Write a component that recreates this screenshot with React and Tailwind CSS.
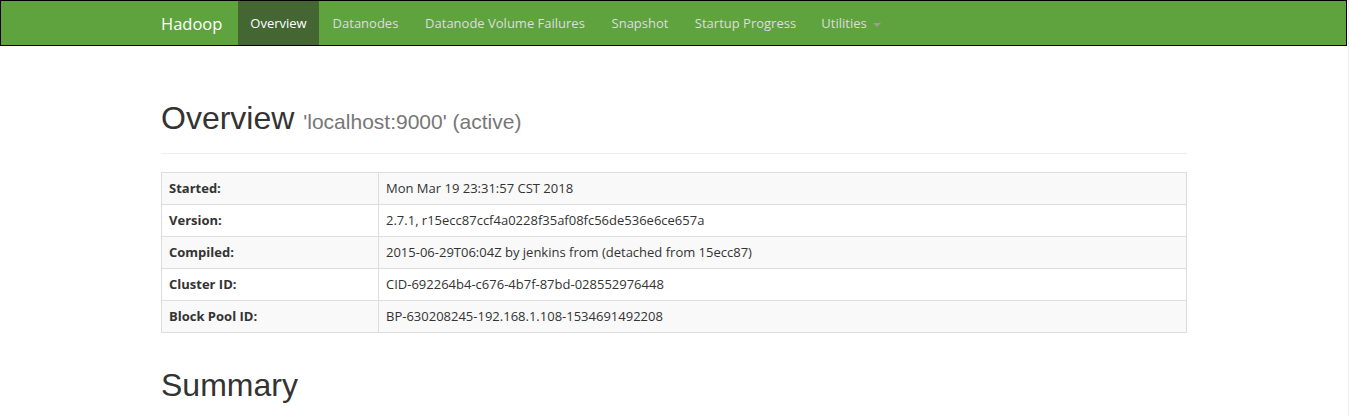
const navItems = [
  { label: "Overview", width: "w-[81px]", active: true },
  { label: "Datanodes", width: "w-[93px]" },
  { label: "Datanode Volume Failures", width: "w-[186px]" },
  { label: "Snapshot", width: "w-[84px]" },
  { label: "Startup Progress", width: "w-[127px]" },
];

const info = [
  ["Started:", "Mon Mar 19 23:31:57 CST 2018"],
  ["Version:", "2.7.1, r15ecc87ccf4a0228f35af08fc56de536e6ce657a"],
  ["Compiled:", "2015-06-29T06:04Z by jenkins from (detached from 15ecc87)"],
  ["Cluster ID:", "CID-692264b4-c676-4b7f-87bd-028552976448"],
  ["Block Pool ID:", "BP-630208245-192.168.1.108-1534691492208"],
];

const App = () => {
  return (
    <div className="min-h-screen bg-white flex font-['Open_Sans',sans-serif] text-[13px] text-[#333]">
      <div className="flex-1 mr-px">
        {/* Navbar */}
        <nav className="h-[46px] bg-[#5fa33e] border border-black flex items-stretch pl-[160px]">
          <div className="w-[77px] flex items-center pt-[2px] text-white text-[16.5px]">
            Hadoop
          </div>
          {navItems.map((item) => (
            <div
              key={item.label}
              className={`${item.width} flex items-center justify-center pt-[2px] ${
                item.active ? "bg-[#446633] text-white" : "text-[#dddddd]"
              }`}
            >
              {item.label}
            </div>
          ))}
          <div className="w-[84px] flex items-center justify-center gap-[6px] pt-[2px] text-[#dddddd]">
            Utilities
            <span className="w-0 h-0 border-l-4 border-r-4 border-t-4 border-l-transparent border-r-transparent border-t-[#9aa08f] mt-[2px]" />
          </div>
        </nav>

        {/* Content */}
        <div className="ml-[161px] w-[1026px]">
          <div className="mt-[55px] pb-[14px] border-b border-[#eeeeee]">
            <h1 className="font-['Liberation_Sans',Arial,sans-serif] text-[32px] leading-[35px] text-[#333]">
              Overview{" "}
              <small className="text-[21px] text-[#777777]">
                'localhost:9000' (active)
              </small>
            </h1>
          </div>

          <div className="mt-[18px] border border-[#dddddd]">
            {info.map(([label, value], i) => (
              <div
                key={label}
                className={`flex ${i === 0 ? "h-[31px]" : "h-[32px] border-t border-[#dddddd]"} ${
                  i % 2 === 0 ? "bg-[#f9f9f9]" : "bg-white"
                }`}
              >
                <div className="w-[217px] border-r border-[#dddddd] px-[7px] flex items-center font-bold">
                  {label}
                </div>
                <div className="flex-1 px-[7px] flex items-center">{value}</div>
              </div>
            ))}
          </div>

          <h1 className="mt-[35px] font-['Liberation_Sans',Arial,sans-serif] text-[32px] leading-[35px] text-[#333]">
            Summary
          </h1>
        </div>
      </div>
      <div className="w-px bg-[#eeeeee]" />
    </div>
  );
};

export default App;
